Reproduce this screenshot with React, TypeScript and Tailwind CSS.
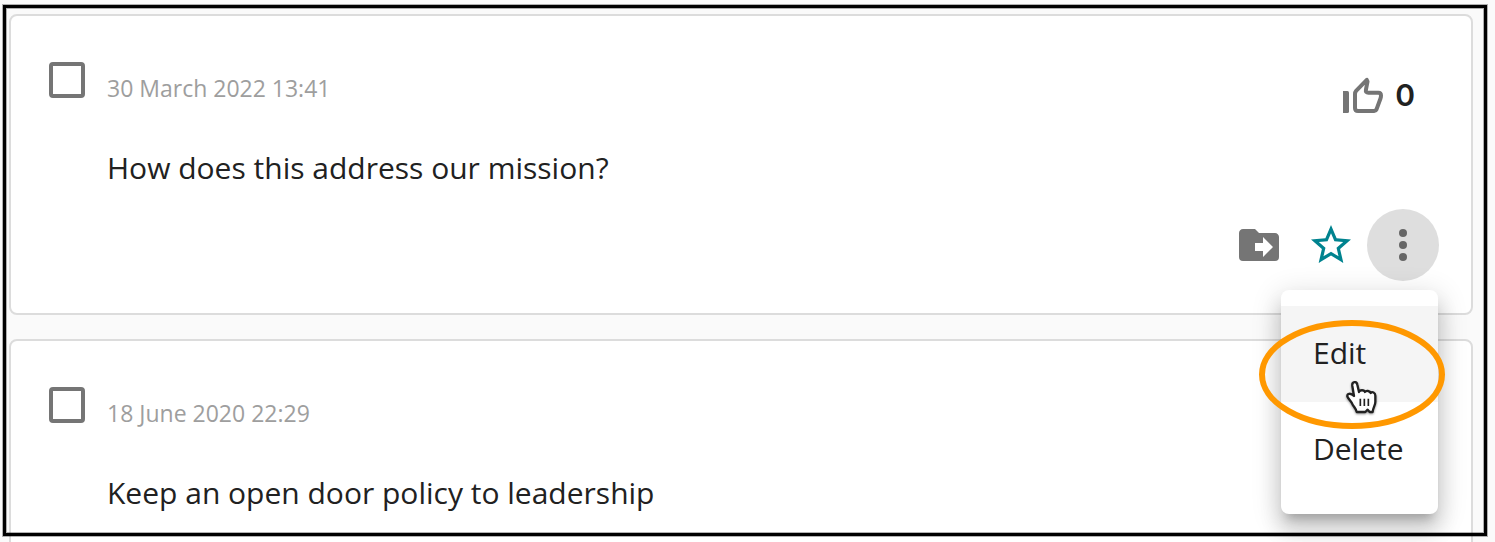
import React, { useState } from 'react';
import { clsx } from 'clsx';

interface Question {
  id: string;
  date: string;
  text: string;
  likes?: number;
}

interface QuestionCardProps {
  question: Question;
  menuOpen: boolean;
  onToggleMenu: () => void;
}

const questions: Question[] = [
  { id: 'q1', date: '30 March 2022 13:41', text: 'How does this address our mission?', likes: 0 },
  { id: 'q2', date: '18 June 2020 22:29', text: 'Keep an open door policy to leadership' },
];

const ThumbUpIcon = () => (
  <svg className="h-9 w-10" viewBox="0 0 40 36" fill="none" aria-hidden="true">
    <path d="M0 14H4.5Q6 14 6 15.5V34.5Q6 36 4.5 36H0Z" fill="currentColor" />
    <path
      d="M12 17.2V31Q12 34 15 34H31.2Q32.8 34 33.5 32.4L37.4 21.8Q38 20.2 38 18.6Q38 15.8 35.4 15.8H25.4Q22.4 15.8 22.9 12.8L24.5 4.6L23.8 2.9L13.1 13.9Q12 15.2 12 17.2Z"
      stroke="currentColor"
      strokeWidth="4"
      strokeLinejoin="round"
    />
  </svg>
);

const FolderMoveIcon = () => (
  <svg className="h-12 w-12" viewBox="0 0 24 24" fill="currentColor" aria-hidden="true">
    <path d="M14,18V15H10V11H14V8L19,13M20,6H12L10,4H4C2.89,4 2,4.89 2,6V18A2,2 0 0,0 4,20H20A2,2 0 0,0 22,18V8C22,6.89 21.1,6 20,6Z" />
  </svg>
);

const StarIcon = () => (
  <svg className="h-12 w-12" viewBox="0 0 24 24" fill="currentColor" aria-hidden="true">
    <path d="M12,15.39L8.24,17.66L9.23,13.38L5.91,10.5L10.29,10.13L12,6.09L13.71,10.13L18.09,10.5L14.77,13.38L15.76,17.66M22,9.24L14.81,8.63L12,2L9.19,8.63L2,9.24L7.45,13.97L5.82,21L12,17.27L18.18,21L16.54,13.97L22,9.24Z" />
  </svg>
);

const DotsIcon = () => (
  <svg className="h-12 w-12" viewBox="0 0 24 24" fill="currentColor" aria-hidden="true">
    <circle cx="12" cy="6" r="2" />
    <circle cx="12" cy="12" r="2" />
    <circle cx="12" cy="18" r="2" />
  </svg>
);

const HandPointer = () => (
  <svg
    className="pointer-events-none absolute left-16 top-[90px] h-[34px] w-8 drop-shadow-[0_1px_1px_rgba(0,0,0,0.4)]"
    viewBox="45 30 96 102"
    aria-hidden="true"
  >
    <path
      d="M72 78L67 48C65 34 80 33 82 44L87 66C89 59 103 59 105 66C108 61 120 62 122 69C126 64 136 67 136 77V96C136 106 129 112 128 126H119L113 119L106 126H80C79 116 70 110 66 100C62 92 54 86 52 79C51 70 62 68 72 78Z"
      fill="#fff"
      stroke="#222"
      strokeWidth="7"
      strokeLinejoin="round"
    />
    <path d="M91 86V108M103 86V108M115 86V108" stroke="#222" strokeWidth="5" fill="none" />
  </svg>
);

const ActionMenu = () => (
  <div
    role="menu"
    className="absolute right-px top-[81px] z-10 min-w-[157px] rounded-lg bg-white py-4 shadow-[0_10px_10px_-6px_rgba(0,0,0,0.2),0_16px_20px_2px_rgba(0,0,0,0.14),0_6px_28px_4px_rgba(0,0,0,0.12)]"
  >
    <button role="menuitem" className="flex h-24 w-full items-center bg-[#f5f5f5] px-8 pb-1">Edit</button>
    <button role="menuitem" className="flex h-24 w-full items-center px-8 pb-1 hover:bg-[#f5f5f5]">Delete</button>
    <svg
      className="pointer-events-none absolute -left-[22px] top-[30px] h-[110px] w-[187px]"
      viewBox="0 0 187 110"
      fill="none"
      aria-hidden="true"
    >
      <ellipse cx="93" cy="54.5" rx="90" ry="51.5" stroke="#ff9800" strokeWidth="6" />
    </svg>
    <HandPointer />
  </div>
);

function QuestionCard({ question, menuOpen, onToggleMenu }: QuestionCardProps) {
  return (
    <article className="rounded-lg border-2 border-[#dcdcdc] bg-white pb-8 pl-[38px] pr-8 pt-[46px]">
      <div className="flex items-start gap-[22px]">
        <input
          type="checkbox"
          aria-label={question.text}
          className="size-9 shrink-0 appearance-none rounded border-4 border-[#757575] checked:bg-[#757575]"
        />
        <div className="min-w-0 flex-1 pt-2.5">
          <time className="block text-[23px] leading-8 text-[#9e9e9e]">{question.date}</time>
          <p className="mt-11 leading-10">{question.text}</p>
        </div>
        {question.likes !== undefined && (
          <button aria-label="Like" className="mr-6 mt-[13px] flex items-center gap-3 text-[#757575]">
            <ThumbUpIcon />
            <span className="font-['Inter',sans-serif] font-semibold leading-10 text-[#212121]">{question.likes}</span>
          </button>
        )}
      </div>

      <div className="mt-[21px] flex justify-end">
        <button aria-label="Move to folder" className="flex size-18 items-center justify-center rounded-full text-[#757575]">
          <FolderMoveIcon />
        </button>
        <button aria-label="Favourite" className="flex size-18 items-center justify-center rounded-full text-[#00838f]">
          <StarIcon />
        </button>
        <div className="relative">
          <button
            aria-label="More actions"
            aria-expanded={menuOpen}
            onClick={onToggleMenu}
            className={clsx('flex size-18 items-center justify-center rounded-full text-[#666]', menuOpen && 'bg-[#dedede]')}
          >
            <DotsIcon />
          </button>
          {menuOpen && <ActionMenu />}
        </div>
      </div>
    </article>
  );
}

export default function App() {
  const [openId, setOpenId] = useState<string | null>('q1');

  return (
    <main className="relative h-screen overflow-hidden bg-[#fafafa] pl-[9px] pr-[22px] pt-3.5 font-['Open_Sans',sans-serif] text-[30px] text-[#212121]">
      <div className="flex flex-col gap-6">
        {questions.map((question) => (
          <QuestionCard
            key={question.id}
            question={question}
            menuOpen={openId === question.id}
            onToggleMenu={() => setOpenId(openId === question.id ? null : question.id)}
          />
        ))}
      </div>

      {/* outline around the whole list */}
      <div className="pointer-events-none absolute bottom-1.5 left-[3px] right-2 top-[5px] z-20 border-3 border-black shadow-[0_0_0_1px_rgba(0,0,0,0.3),inset_0_0_0_1px_rgba(0,0,0,0.3)]" />
    </main>
  );
}
